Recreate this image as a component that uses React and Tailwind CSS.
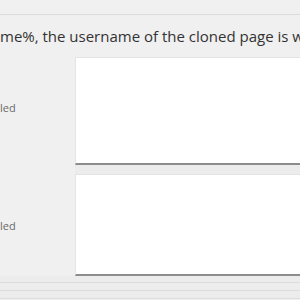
import React from 'react';

const font = { fontFamily: '"Open Sans", "Noto Sans", sans-serif' };

const FieldRow = ({ label, height, labelOffset }) => (
  <div className="flex">
    <div className="w-[75px] flex items-center text-[11px] text-[#6a6a6a] leading-none" style={font}>
      <span className={labelOffset}>{label}</span>
    </div>
    <div className={`flex-1 bg-white border-l border-t border-[#e4e4e4] border-b-2 border-b-[#8c8c8c] ${height}`} />
  </div>
);

const App = () => {
  return (
    <div className="w-[300px] h-[300px] overflow-hidden bg-[#f0f0f0]" style={font}>
      <div className="h-[15px] border-b border-[#dcdcdc]" />
      <div className="h-[42px] flex items-center overflow-hidden">
        <div className="whitespace-nowrap text-[15px] leading-[20px] text-[#333] -mt-[1px]">
          me%, the username of the cloned page is will be used
        </div>
      </div>
      <FieldRow label="led" height="h-[108px]" labelOffset="-mt-[8px]" />
      <div className="flex h-[9px]">
        <div className="w-[75px]" />
        <div className="flex-1 bg-[#ececec]" />
      </div>
      <FieldRow label="led" height="h-[102px]" labelOffset="mt-0" />
      <div className="h-[7px] bg-[#ececec] border-b border-[#dcdcdc]" />
      <div className="h-[8px] bg-[#ededed] border-b border-[#dcdcdc]" />
      <div className="h-[8px] bg-[#ececec] border-b border-[#dcdcdc]" />
    </div>
  );
};

export default App;
